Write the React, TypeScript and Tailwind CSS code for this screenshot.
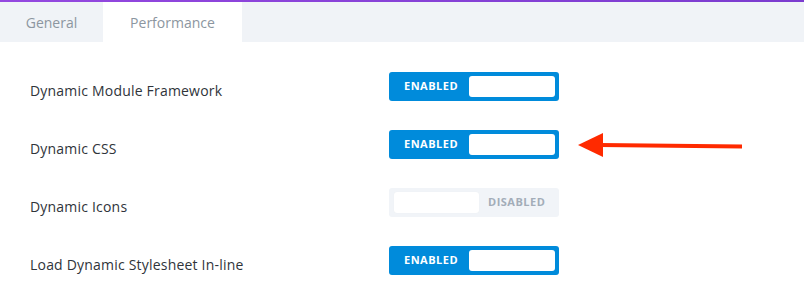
const rows = [
  { label: 'Dynamic Module Framework', enabled: true },
  { label: 'Dynamic CSS', enabled: true, arrow: true },
  { label: 'Dynamic Icons', enabled: false },
  { label: 'Load Dynamic Stylesheet In-line', enabled: true },
]

function Toggle({ enabled }: { enabled: boolean }) {
  if (enabled) {
    return (
      <div className="flex items-center w-[170px] h-[29px] rounded-[3px] bg-[#008bdb] pl-[15px] pr-[4px]">
        <span className="text-[11px] font-bold text-white tracking-[0.5px] w-[65px]">ENABLED</span>
        <span className="flex-1 h-[21px] rounded-[3px] bg-white" />
      </div>
    )
  }
  return (
    <div className="flex items-center w-[170px] h-[29px] rounded-[3px] bg-[#f1f4f8] pl-[5px] pr-[4px]">
      <span className="w-[85px] h-[21px] rounded-[3px] bg-white shadow-[0_0_1px_rgba(0,0,0,0.05)]" />
      <span className="ml-[9px] text-[11px] font-bold text-[#a3adb8] tracking-[0.5px]">DISABLED</span>
    </div>
  )
}

function Arrow() {
  return (
    <svg width="170" height="26" viewBox="0 0 170 26" className="ml-[19px]">
      <line x1="22" y1="13" x2="164" y2="14.5" stroke="#ff2a00" strokeWidth="4" />
      <polygon points="0,13 25,1 25,25" fill="#ff2a00" />
    </svg>
  )
}

export default function App() {
  return (
    <div className="w-[804px] h-[299px] bg-white overflow-hidden" style={{ fontFamily: '"Open Sans", sans-serif' }}>
      <div className="h-[2px] bg-gradient-to-r from-[#9448e0] to-[#7b3bcf]" />
      <div className="flex h-[40px] bg-[#f0f3f7]">
        <div className="w-[103px] flex items-center justify-center text-[14px] text-[#8c96a0]">General</div>
        <div className="w-[139px] flex items-center justify-center text-[14px] text-[#8c96a0] bg-white">Performance</div>
      </div>
      <div className="pt-[30px] flex flex-col gap-[29px]">
        {rows.map((row) => (
          <div key={row.label} className="flex items-center h-[29px]">
            <div className="w-[389px] pl-[30px] pt-[8px] text-[14px] font-medium tracking-[0.2px] text-[#2f343a]">{row.label}</div>
            <Toggle enabled={row.enabled} />
            {row.arrow && <Arrow />}
          </div>
        ))}
      </div>
    </div>
  )
}
